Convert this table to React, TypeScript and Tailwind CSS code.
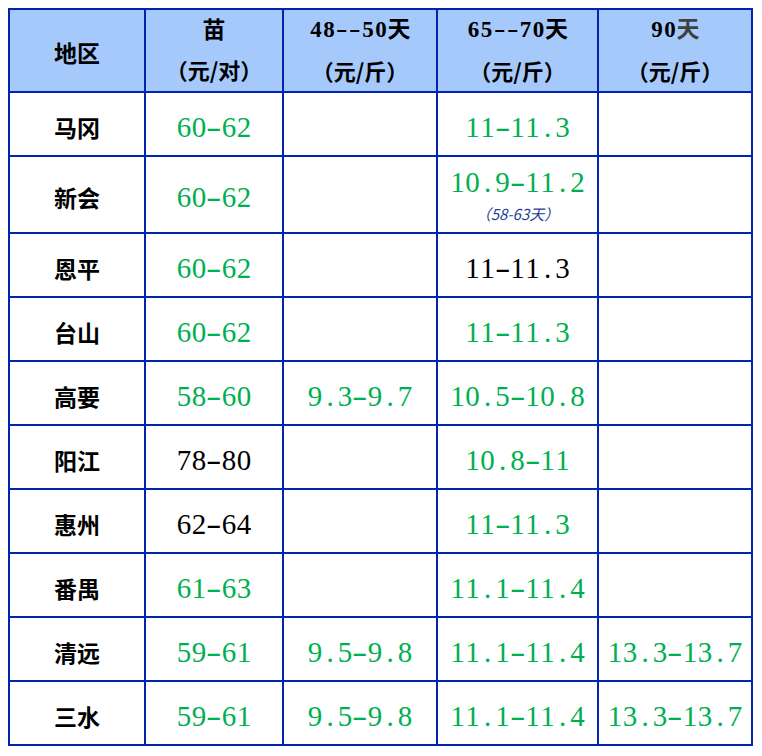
import React from "react";

const CJK = '"Noto Sans CJK SC", "Noto Sans", sans-serif';
const SERIF = '"Liberation Serif", "Noto Sans CJK SC", serif';

function Num({ text, color }: { text: string; color: "green" | "black" }) {
  return (
    <span
      className={
        "flex text-[29px] leading-[29px] " +
        (color === "green" ? "text-[#00b050]" : "text-black")
      }
      style={{ fontFamily: SERIF }}
    >
      {text.split("").map((c, i) =>
        c === "-" ? (
          <span key={i} className="inline-block w-[15px] text-center">
            <span className="inline-block scale-x-[1.6]">-</span>
          </span>
        ) : (
          <span key={i} className="inline-block w-[15px] text-center">
            {c}
          </span>
        )
      )}
    </span>
  );
}

type Cell = { t: string; c: "green" | "black" } | null;

const rows: { name: string; cells: Cell[]; note?: boolean }[] = [
  { name: "马冈", cells: [{ t: "60-62", c: "green" }, null, { t: "11-11.3", c: "green" }, null] },
  { name: "新会", cells: [{ t: "60-62", c: "green" }, null, { t: "10.9-11.2", c: "green" }, null], note: true },
  { name: "恩平", cells: [{ t: "60-62", c: "green" }, null, { t: "11-11.3", c: "black" }, null] },
  { name: "台山", cells: [{ t: "60-62", c: "green" }, null, { t: "11-11.3", c: "green" }, null] },
  { name: "高要", cells: [{ t: "58-60", c: "green" }, { t: "9.3-9.7", c: "green" }, { t: "10.5-10.8", c: "green" }, null] },
  { name: "阳江", cells: [{ t: "78-80", c: "black" }, null, { t: "10.8-11", c: "green" }, null] },
  { name: "惠州", cells: [{ t: "62-64", c: "black" }, null, { t: "11-11.3", c: "green" }, null] },
  { name: "番禺", cells: [{ t: "61-63", c: "green" }, null, { t: "11.1-11.4", c: "green" }, null] },
  { name: "清远", cells: [{ t: "59-61", c: "green" }, { t: "9.5-9.8", c: "green" }, { t: "11.1-11.4", c: "green" }, { t: "13.3-13.7", c: "green" }] },
  { name: "三水", cells: [{ t: "59-61", c: "green" }, { t: "9.5-9.8", c: "green" }, { t: "11.1-11.4", c: "green" }, { t: "13.3-13.7", c: "green" }] },
];

function HeadNum({ num, dayColor }: { num: string; dayColor?: string }) {
  return (
    <span className="flex items-baseline">
      <span className="flex text-[23px] font-bold" style={{ fontFamily: SERIF }}>
        {num.split("").map((c, i) =>
          c === "-" ? (
            <span key={i} className="inline-block w-[13px] text-center">
              <span className="inline-block scale-x-[1.5]">-</span>
            </span>
          ) : (
            <span key={i} className="inline-block w-[13px] text-center">
              {c}
            </span>
          )
        )}
      </span>
      <span
        className={"text-[23px] font-semibold " + (dayColor ?? "text-black")}
        style={{ fontFamily: CJK }}
      >
        天
      </span>
    </span>
  );
}

function Unit({ text }: { text: string }) {
  return (
    <span className="text-[22px] font-semibold" style={{ fontFamily: CJK }}>
      {text}
    </span>
  );
}

const headCell =
  "bg-[#a6c9fc] flex flex-col items-center justify-center leading-[41px] pb-[4px] text-black";

export default function App() {
  return (
    <div className="w-[762px] h-[756px] bg-white pt-[8px] pl-[8px]">
      <div className="inline-grid bg-[#0324ae] p-[2px] gap-[2px] grid-cols-[134px_136px_152px_159px_152px] grid-rows-[81px_62px_75px_62px_62px_62px_62px_62px_62px_62px_62px]">
        {/* header */}
        <div className="bg-[#a6c9fc] flex items-center justify-center pt-[3px]">
          <span className="text-[23px] font-semibold text-black" style={{ fontFamily: CJK }}>
            地区
          </span>
        </div>
        <div className={headCell}>
          <span className="text-[23px] font-semibold" style={{ fontFamily: CJK }}>
            苗
          </span>
          <Unit text="（元/对）" />
        </div>
        <div className={headCell}>
          <HeadNum num="48--50" />
          <Unit text="（元/斤）" />
        </div>
        <div className={headCell}>
          <HeadNum num="65--70" />
          <Unit text="（元/斤）" />
        </div>
        <div className={headCell}>
          <HeadNum num="90" dayColor="text-[#404040]" />
          <Unit text="（元/斤）" />
        </div>

        {rows.map((r) => (
          <React.Fragment key={r.name}>
            <div className="bg-white flex items-center justify-center pt-[6px]">
              <span className="text-[23px] font-semibold text-black" style={{ fontFamily: CJK }}>
                {r.name}
              </span>
            </div>
            {r.cells.map((c, i) => (
              <div
                key={i}
                className={
                  "bg-white flex flex-col items-center justify-center " +
                  (r.note && i === 2 ? "pt-[0px]" : "pt-[6px]")
                }
              >
                {c && <Num text={c.t} color={c.c} />}
                {r.note && i === 2 && (
                  <span
                    className="mt-[9px] text-[15px] italic text-[#1f3f8f] leading-[16px]"
                    style={{ fontFamily: CJK }}
                  >
                    （58-63天）
                  </span>
                )}
              </div>
            ))}
          </React.Fragment>
        ))}
      </div>
    </div>
  );
}
